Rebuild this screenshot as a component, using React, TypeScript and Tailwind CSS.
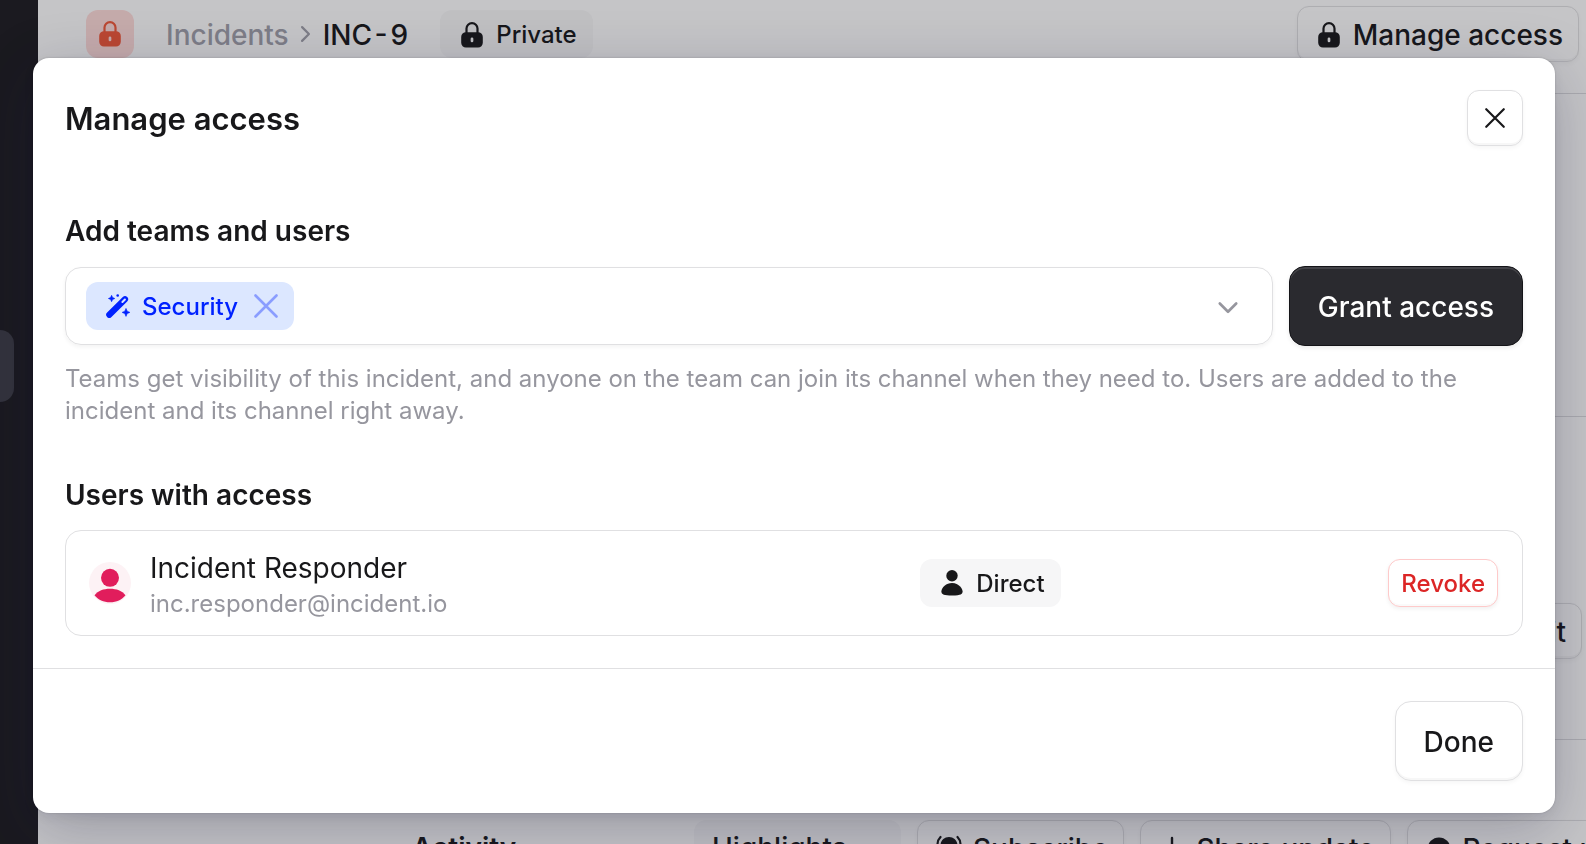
import { useState } from "react";
import type { ReactNode } from "react";

interface IconProps {
  className?: string;
}

function LockIcon({ className }: IconProps) {
  return (
    <svg viewBox="0 0 32 32" fill="none" className={className} aria-hidden="true">
      <path
        d="M10.5 14V9.600a5.500 5.400 0 0 1 11 0V14"
        stroke="currentColor"
        strokeWidth="2.2"
      />
      <path
        fillRule="evenodd"
        fill="currentColor"
        d="M10 13.2h12a4.800 4.800 0 0 1 4.800 4.800v5.800a4.800 4.800 0 0 1-4.800 4.800H10a4.800 4.800 0 0 1-4.800-4.800v-5.800a4.800 4.800 0 0 1 4.800-4.800Zm6 5.200a1.350 1.350 0 0 0-1.350 1.350v2.200a1.350 1.350 0 0 0 2.700 0v-2.200a1.350 1.350 0 0 0-1.350-1.350Z"
      />
    </svg>
  );
}

function WandIcon({ className }: IconProps) {
  return (
    <svg viewBox="0 0 24 24" fill="currentColor" className={className} aria-hidden="true">
      <path d="M3.300 20.800 19 5.300" stroke="currentColor" strokeWidth="6.2" strokeLinecap="round" />
      <path d="M16.400 8 18.900 5.500" stroke="#dce7ff" strokeWidth="2" strokeLinecap="round" />
      <path d="M5.600 1.300 6.600 3.500l2.200 1-2.200 1-1 2.200-1-2.200-2.200-1 2.200-1Z" stroke="currentColor" strokeWidth="0.6" />
      <path d="M20 14.400 21.200 17.200l2.700 1.200-2.700 1.200L20 22.400l-1.200-2.800-2.700-1.200 2.700-1.200Z" stroke="currentColor" strokeWidth="0.6" />
      <circle cx="11.700" cy="1.500" r="1.300" />
    </svg>
  );
}

function PersonIcon({ className }: IconProps) {
  return (
    <svg viewBox="0 0 32 32" fill="currentColor" className={className} aria-hidden="true">
      <circle cx="16" cy="8.800" r="5.700" />
      <path d="M16 16c5.600 0 10.600 4.400 10.600 8.600 0 3-2.800 4-10.600 4s-10.600-1-10.600-4C5.400 20.400 10.400 16 16 16Z" />
    </svg>
  );
}

function CrossIcon({ className }: IconProps) {
  return (
    <svg
      viewBox="0 0 24 24"
      fill="none"
      stroke="currentColor"
      strokeWidth="2.6"
      strokeLinecap="round"
      className={className}
      aria-hidden="true"
    >
      <path d="m1.500 1.500 21 21m0-21-21 21" />
    </svg>
  );
}

function ChevronIcon({ className }: IconProps) {
  return (
    <svg
      viewBox="0 0 24 24"
      fill="none"
      stroke="currentColor"
      strokeWidth="2.7"
      strokeLinecap="round"
      strokeLinejoin="round"
      className={className}
      aria-hidden="true"
    >
      <path d="m3.800 8.500 8.200 8.200 8.200-8.200" />
    </svg>
  );
}

function BellIcon({ className }: IconProps) {
  return (
    <svg viewBox="0 0 32 32" fill="none" className={className} aria-hidden="true">
      <path
        fill="currentColor"
        d="M16 4c5 0 8.500 3.800 8.500 8.500V18l2.500 5H5l2.500-5v-5.500C7.500 7.800 11 4 16 4Zm-4 21h8a4 4 0 0 1-8 0Z"
      />
      <path
        stroke="currentColor"
        strokeWidth="2.2"
        strokeLinecap="round"
        d="M7.500 4C5.500 6 4.500 8.500 4.500 11.500M24.500 4c2 2 3 4.500 3 7.500"
      />
    </svg>
  );
}

function Avatar() {
  return (
    <svg viewBox="0 0 42 42" className="size-[42px] shrink-0" aria-hidden="true">
      <circle cx="21" cy="21" r="21" fill="#fdf2f5" />
      <circle cx="21" cy="15.800" r="9" fill="#e11d5c" />
      <path d="M5.500 33.200C9 28.700 14.500 26.700 21 26.700S33 28.700 36.500 33.200C33 37.700 27.500 40.200 21 40.200S9 37.700 5.500 33.200Z" fill="#e11d5c" />
    </svg>
  );
}

const outlineButton =
  "flex shrink-0 items-center justify-center border border-[#e0e0e2] bg-white font-medium text-[#18181a] shadow-[0_2px_4px_rgba(0,0,0,0.04),inset_0_-2px_0_rgba(0,0,0,0.03)]";

function PageButton({ icon, children }: { icon?: ReactNode; children: ReactNode }) {
  return (
    <button type="button" className={`${outlineButton} h-14 gap-2 rounded-xl px-[15px] pt-0.5 text-[28px]`}>
      {icon}
      {children}
    </button>
  );
}

function IncidentPage() {
  return (
    <div className="flex h-screen overflow-hidden bg-white text-[#18181a]">
      <nav className="flex w-[38px] shrink-0 flex-col bg-[#1c1b20] pt-[330px]">
        <a href="#incidents" aria-label="Incidents" className="h-[72px] w-3.5 rounded-r-2xl bg-[#3d3d47]" />
      </nav>

      <div className="flex min-w-0 flex-1 flex-col">
        <header className="flex h-[94px] shrink-0 items-start justify-between border-b border-[#dcdcdf] pt-1.5 pr-[7px] pl-12">
          <div className="flex h-14 items-center text-[28px] font-medium">
            <span className="mr-8 flex size-12 items-center justify-center rounded-xl bg-[#ffdcda]">
              <LockIcon className="size-8 text-[#f25839]" />
            </span>
            <a href="#incidents" className="pt-0.5 text-[#a1a1aa]">
              Incidents
            </a>
            <ChevronIcon className="mr-2 ml-1.5 size-5 -rotate-90 text-[#a1a1aa]" />
            <span className="pt-0.5 tabular-nums">INC-9</span>
            <span className="ml-8 flex h-12 items-center gap-2 rounded-xl bg-[#f8f8f9] px-4 pt-0.5 text-2xl">
              <LockIcon className="size-8" />
              Private
            </span>
          </div>
          <PageButton icon={<LockIcon className="size-8" />}>Manage access</PageButton>
        </header>

        <div className="h-[323px] shrink-0 border-b border-[#dcdcdf]" />
        <div className="flex h-[323px] shrink-0 items-center justify-end border-b border-[#dcdcdf] pt-[106px] pr-1">
          <PageButton>Edit</PageButton>
        </div>

        <div className="flex shrink-0 items-start gap-4 pt-20 pl-[374px] whitespace-nowrap">
          <h2 className="flex h-14 w-[266px] shrink-0 items-center text-[28px] font-semibold">Activity</h2>
          <button
            type="button"
            className="flex h-14 w-[207px] shrink-0 items-center rounded-xl bg-[#f8f8f9] px-[18px] text-[28px] font-medium"
          >
            Highlights
          </button>
          <PageButton icon={<BellIcon className="size-8" />}>Subscribe</PageButton>
          <PageButton
            icon={
              <svg viewBox="0 0 32 32" className="size-8" fill="none" stroke="currentColor" strokeWidth="2.4" aria-hidden="true">
                <path d="M16 5v22M5 16h22" strokeLinecap="round" />
              </svg>
            }
          >
            Share update
          </PageButton>
          <PageButton
            icon={
              <svg viewBox="0 0 32 32" className="size-8" fill="currentColor" aria-hidden="true">
                <circle cx="16" cy="16" r="11.500" />
              </svg>
            }
          >
            Request update
          </PageButton>
        </div>
      </div>
    </div>
  );
}

function ManageAccessDialog() {
  const [teams, setTeams] = useState(["Security"]);

  return (
    <div
      role="dialog"
      aria-modal="true"
      aria-labelledby="dialog-title"
      className="w-full rounded-2xl bg-white text-[#18181a] shadow-[0_0_2px_rgba(0,0,0,0.2),0_4px_12px_rgba(20,20,35,0.06),0_16px_60px_rgba(24,24,60,0.26)]"
    >
      <div className="flex items-center justify-between px-8 pt-8">
        <h1 id="dialog-title" className="pt-0.5 text-[31px] font-semibold">
          Manage access
        </h1>
        <button type="button" aria-label="Close" className={`${outlineButton} size-14 rounded-xl`}>
          <CrossIcon className="size-5" />
        </button>
      </div>

      <div className="px-8 pt-[65px] pb-8">
        <label htmlFor="grant-to" className="mb-[15px] block text-[28px] leading-10 font-semibold">
          Add teams and users
        </label>
        <div className="flex items-center gap-4">
          <div className="flex h-[78px] min-w-0 flex-1 items-center rounded-2xl border border-[#e0e0e2] px-5 shadow-[0_2px_4px_rgba(0,0,0,0.05)]">
            {teams.map((team) => (
              <span
                key={team}
                className="flex h-12 items-center rounded-xl bg-[#dce7ff] pr-4 pl-5 text-2xl font-medium text-[#0022ff]"
              >
                <WandIcon className="mr-3 size-6" />
                <span className="pt-0.5">{team}</span>
                <button
                  type="button"
                  aria-label={`Remove ${team}`}
                  className="ml-4 text-[#8a9dff]"
                  onClick={() => setTeams(teams.filter((t) => t !== team))}
                >
                  <CrossIcon className="size-6" />
                </button>
              </span>
            ))}
            <input id="grant-to" type="text" className="h-full min-w-0 flex-1 px-2 text-2xl outline-none" />
            <button type="button" aria-label="Show options" className="px-3 pt-0.5 text-[#96969e]">
              <ChevronIcon className="size-6" />
            </button>
          </div>
          <button
            type="button"
            className="h-20 shrink-0 rounded-2xl border border-[#141418] bg-[#2a2a2f] px-7 pt-0.5 text-[28px] font-medium text-white shadow-[0_2px_4px_rgba(0,0,0,0.08),inset_0_2px_0_rgba(255,255,255,0.12)]"
          >
            Grant access
          </button>
        </div>
        <p className="mt-[17px] text-2xl leading-8 text-[#96969e]">
          Teams get visibility of this incident, and anyone on the team can join its channel when they need to. Users
          are added to the incident and its channel right away.
        </p>

        <h2 className="mt-12 mb-[15px] text-[28px] leading-10 font-semibold">Users with access</h2>
        <ul className="rounded-2xl border border-[#e0e0e2]">
          <li className="grid h-[104px] grid-cols-[59fr_41fr] items-center pr-6 pl-[23px]">
            <div className="flex items-center gap-[19px]">
              <Avatar />
              <div className="pt-0.5">
                <p className="text-[28px] leading-10">Incident Responder</p>
                <p className="text-2xl leading-8 text-[#96969e]">inc.responder@incident.io</p>
              </div>
            </div>
            <div className="flex items-center justify-between">
              <span className="flex h-12 items-center gap-2 rounded-xl bg-[#f6f6f7] px-4 text-2xl font-medium">
                <PersonIcon className="size-8" />
                <span className="pt-0.5">Direct</span>
              </span>
              <button
                type="button"
                className="h-12 rounded-xl border border-[#fecaca] bg-white px-3 pt-0.5 text-2xl font-medium text-[#dc2626] shadow-[0_2px_4px_rgba(0,0,0,0.06),inset_0_-2px_0_rgba(0,0,0,0.02)]"
              >
                Revoke
              </button>
            </div>
          </li>
        </ul>
      </div>

      <div className="flex justify-end border-t border-[#e0e0e2] p-8">
        <button type="button" className={`${outlineButton} h-20 rounded-2xl px-7 pt-0.5 text-[28px]`}>
          Done
        </button>
      </div>
    </div>
  );
}

export default function App() {
  return (
    <div className="font-['Inter',sans-serif]">
      <IncidentPage />
      <div className="fixed inset-0 bg-[#18181f]/25 pt-[58px] pr-[31px] pl-[33px]">
        <ManageAccessDialog />
      </div>
    </div>
  );
}
